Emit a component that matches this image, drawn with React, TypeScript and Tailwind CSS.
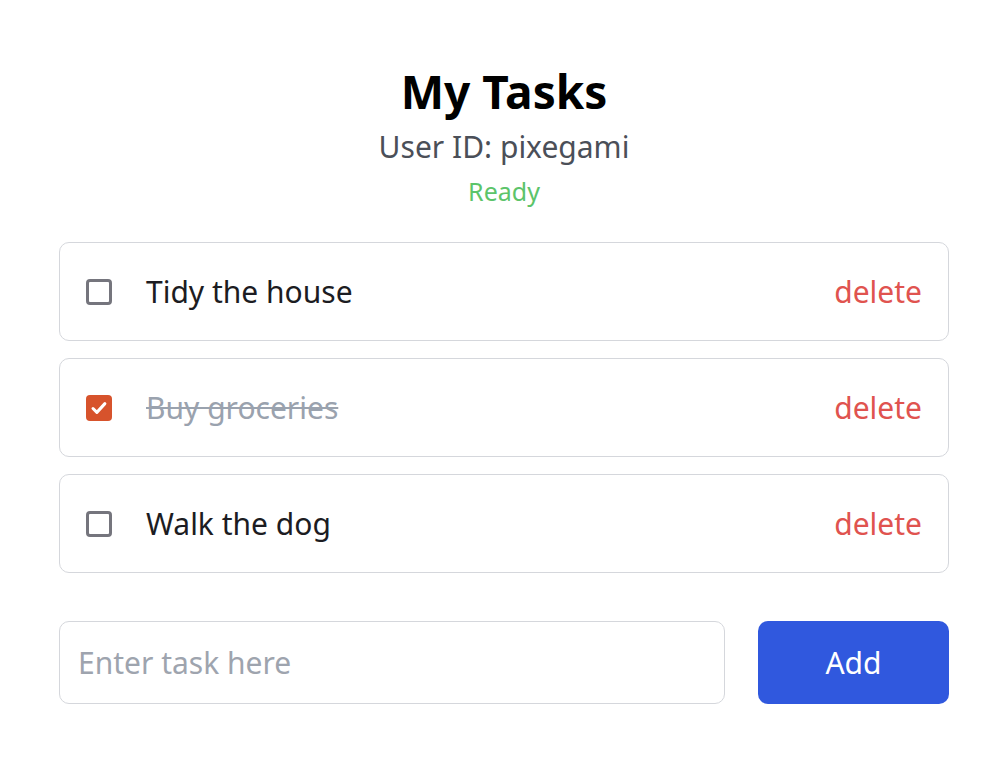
import React, { useState } from 'react'

interface Task {
  id: number
  title: string
  done: boolean
}

const initialTasks: Task[] = [
  { id: 1, title: 'Tidy the house', done: false },
  { id: 2, title: 'Buy groceries', done: true },
  { id: 3, title: 'Walk the dog', done: false },
]

const Checkbox: React.FC<{ checked: boolean; onClick: () => void }> = ({ checked, onClick }) =>
  checked ? (
    <span
      onClick={onClick}
      className="flex h-[26px] w-[26px] shrink-0 cursor-pointer items-center justify-center rounded-[4px] bg-[#d7532c]"
    >
      <svg viewBox="0 0 16 16" className="h-[20px] w-[20px]" fill="none">
        <path d="M3.2 8.4l3.1 3.1 6.4-7" stroke="white" strokeWidth="2.4" strokeLinecap="round" strokeLinejoin="round" />
      </svg>
    </span>
  ) : (
    <span
      onClick={onClick}
      className="block h-[26px] w-[26px] shrink-0 cursor-pointer rounded-[4px] border-[3px] border-[#75757d] bg-white"
    />
  )

export default function App() {
  const [tasks, setTasks] = useState<Task[]>(initialTasks)
  const [text, setText] = useState('')

  const toggle = (id: number) =>
    setTasks(tasks.map((t) => (t.id === id ? { ...t, done: !t.done } : t)))

  const remove = (id: number) => setTasks(tasks.filter((t) => t.id !== id))

  const add = () => {
    if (!text.trim()) return
    setTasks([...tasks, { id: Date.now(), title: text.trim(), done: false }])
    setText('')
  }

  return (
    <div className="min-h-screen bg-white font-['Noto_Sans',sans-serif]">
      <div className="mx-auto w-[890px] pt-[62px]">
        {/* header */}
        <div className="flex flex-col items-center">
          <h1 className="text-[46px] font-bold leading-[58px] text-black">My Tasks</h1>
          <div className="mt-[7px] text-[30px] leading-[40px] text-[#4b4f58]">User ID: pixegami</div>
          <div className="mt-[7px] text-[25px] leading-[34px] text-[#5cc46a]">Ready</div>
        </div>

        {/* list */}
        <div className="mt-[34px] flex flex-col gap-[17px]">
          {tasks.map((t) => (
            <div
              key={t.id}
              className="flex h-[99px] items-center rounded-[10px] border border-[#d5d7dc] pl-[26px] pr-[26px]"
            >
              <Checkbox checked={t.done} onClick={() => toggle(t.id)} />
              <span
                className={`ml-[34px] flex-1 text-[30px] ${
                  t.done ? 'text-[#9aa2ae] line-through decoration-[2px]' : 'text-[#1c1c22]'
                }`}
              >
                {t.title}
              </span>
              <button onClick={() => remove(t.id)} className="text-[30px] text-[#e0534f]">
                delete
              </button>
            </div>
          ))}
        </div>

        {/* add form */}
        <div className="mt-[48px] flex gap-[33px]">
          <input
            value={text}
            onChange={(e) => setText(e.target.value)}
            placeholder="Enter task here"
            className="h-[83px] flex-1 rounded-[10px] border border-[#d5d7dc] px-[18px] text-[30px] text-[#1c1c22] outline-none placeholder:text-[#9ea4ae]"
          />
          <button
            onClick={add}
            className="h-[83px] w-[191px] rounded-[10px] bg-[#3058de] text-[30px] text-white"
          >
            Add
          </button>
        </div>
      </div>
    </div>
  )
}
